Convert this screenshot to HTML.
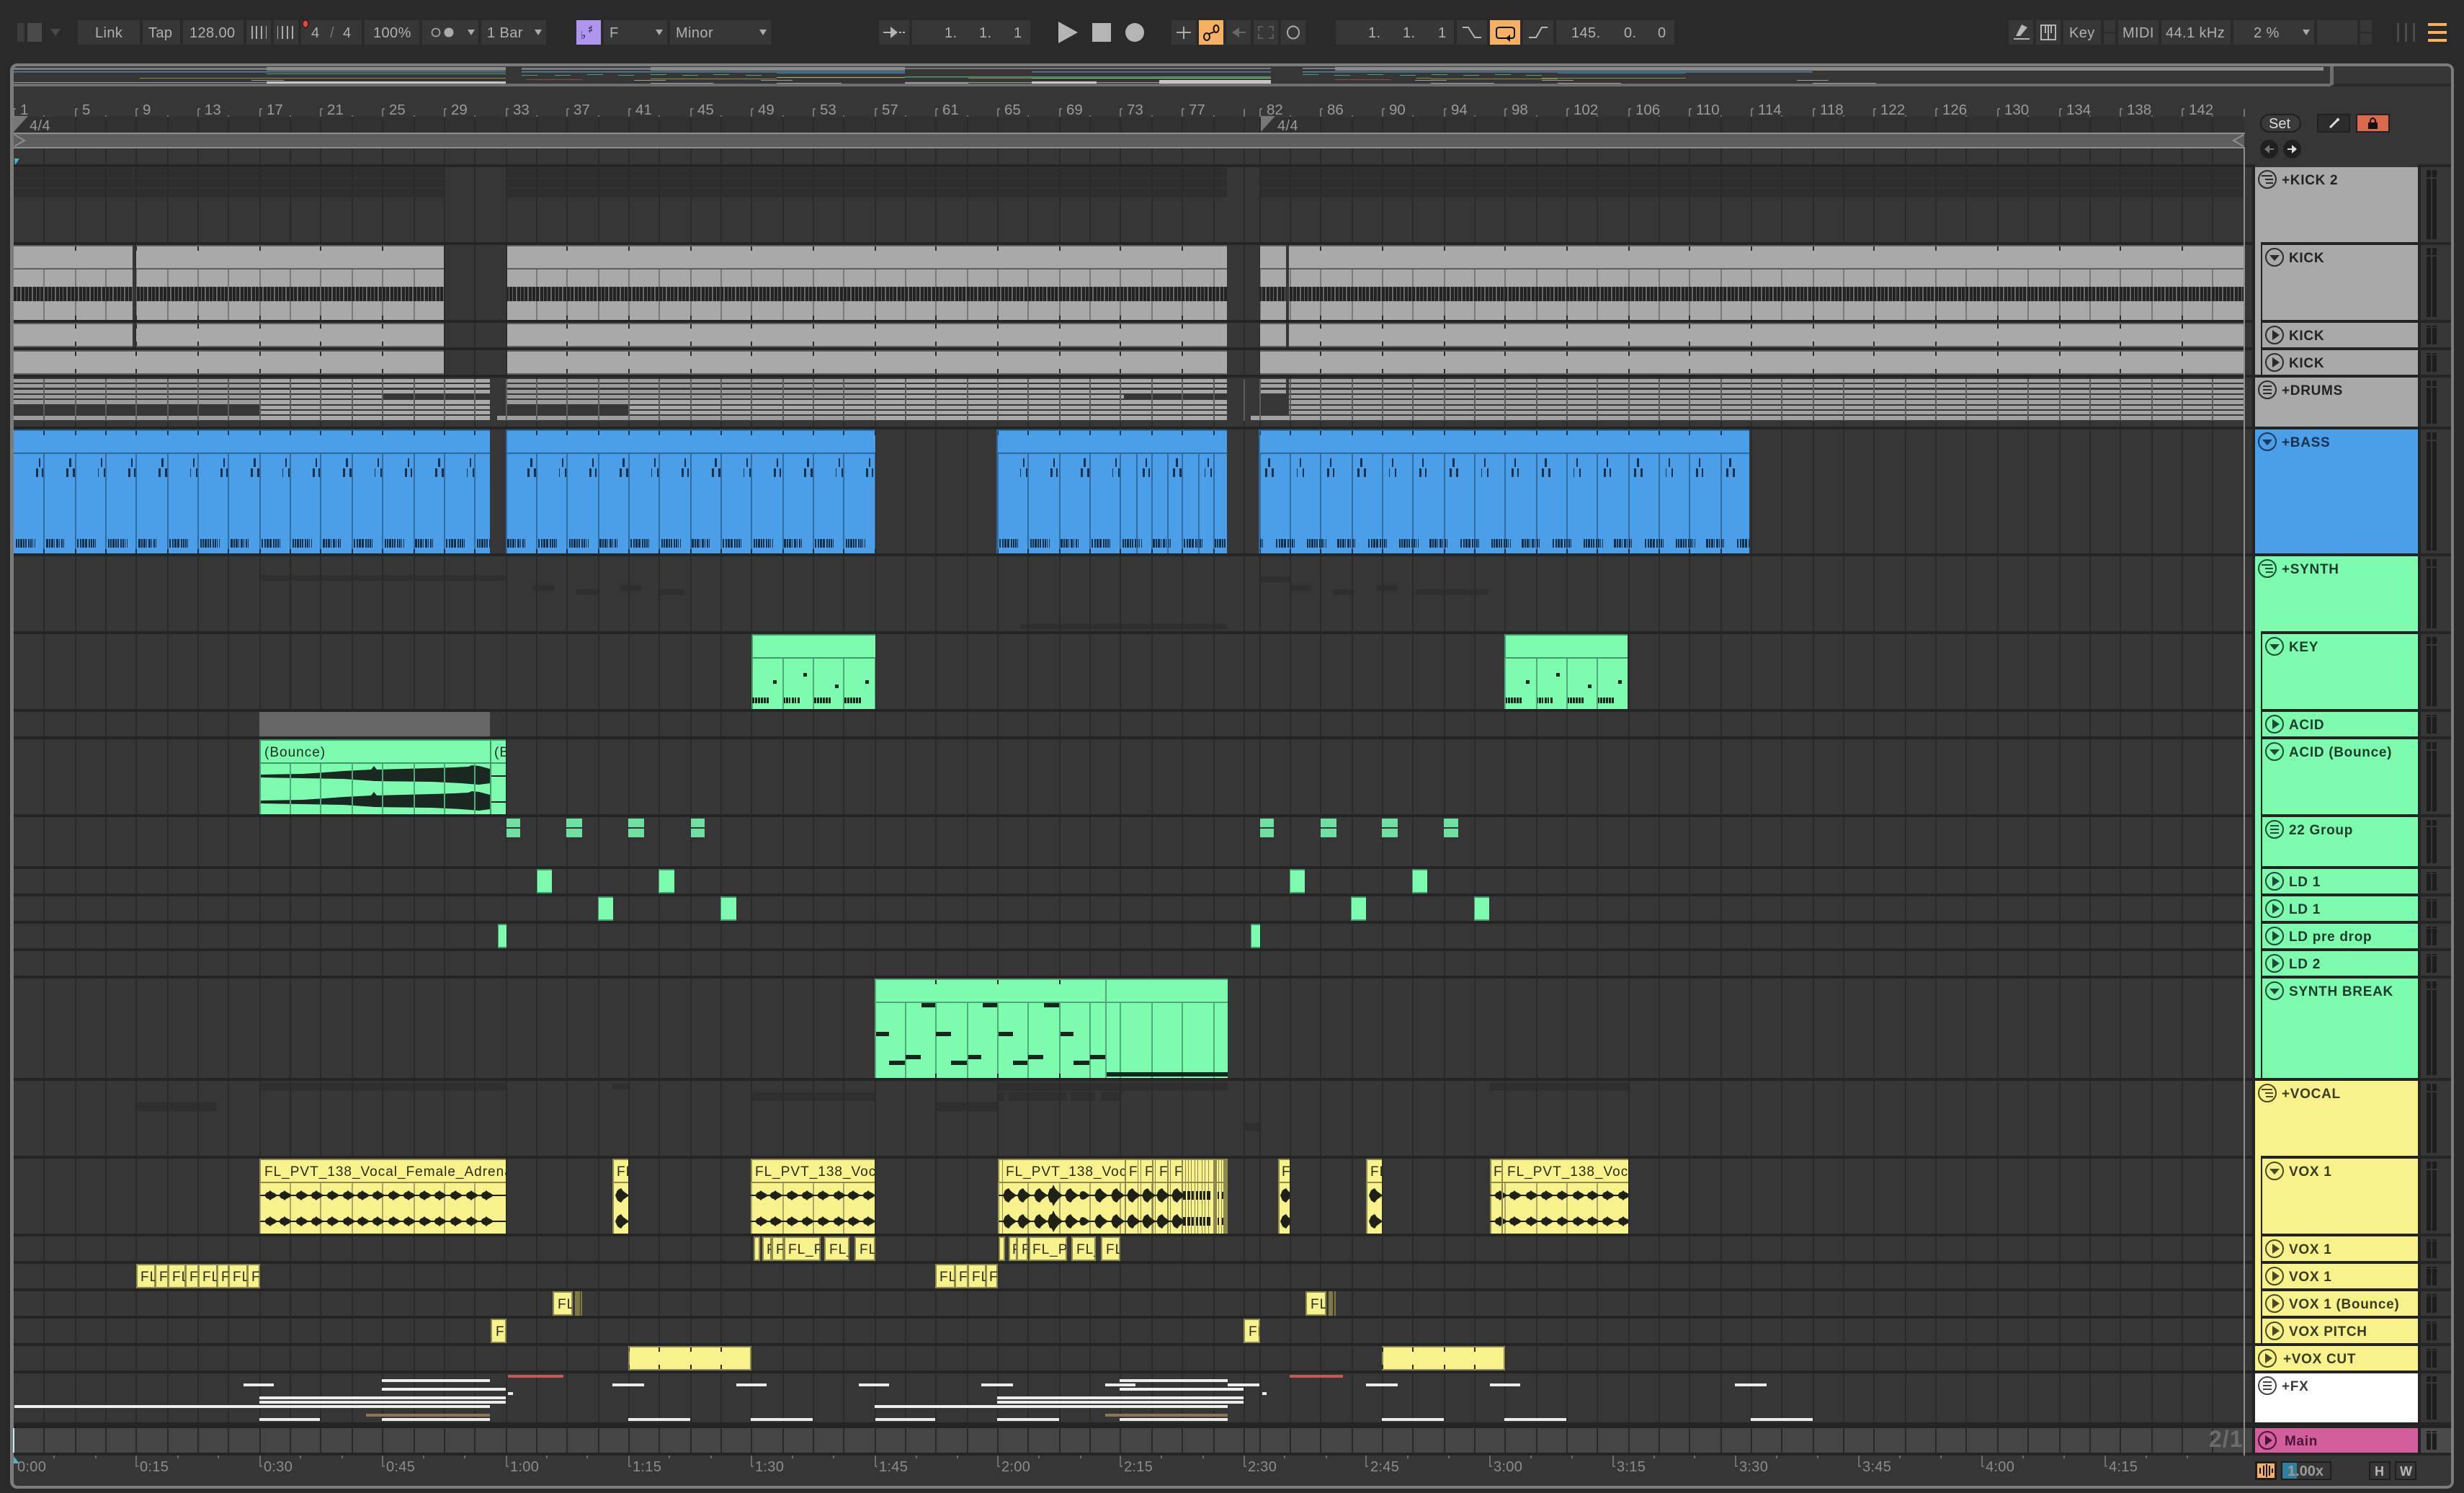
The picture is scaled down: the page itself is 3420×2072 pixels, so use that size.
<!DOCTYPE html>
<html><head><meta charset="utf-8"><title>Arrangement</title>
<style>
html,body{margin:0;padding:0;background:#2a2a2a}
svg{display:block}
.tb{font-size:20px;fill:#b0b0b0;letter-spacing:.4px}
.rl{font-size:20.5px;fill:#9a9a9a}
.tm{font-size:20px;fill:#8c8c8c;letter-spacing:.3px}
.n{font-size:19px;font-weight:bold;letter-spacing:.7px}
.c{font-size:19px;letter-spacing:1px;fill:#2a2a16}
.cg{font-size:19px;letter-spacing:1px;fill:#1a2a22}
.y{fill:#f7f28b;stroke:#8d8a50;stroke-width:2}
.e{shape-rendering:crispEdges}
</style></head><body>
<svg xmlns="http://www.w3.org/2000/svg" width="3420" height="2072" viewBox="0 0 3420 2072" font-family="'Liberation Sans',sans-serif">
<defs>
<path id="g" d="M61 0V2072M105 0V2072M147 0V2072M189 0V2072M233 0V2072M275 0V2072M317 0V2072M361 0V2072M403 0V2072M445 0V2072M489 0V2072M531 0V2072M575 0V2072M617 0V2072M659 0V2072M703 0V2072M745 0V2072M787 0V2072M831 0V2072M873 0V2072M915 0V2072M959 0V2072M1001 0V2072M1043 0V2072M1087 0V2072M1129 0V2072M1171 0V2072M1215 0V2072M1257 0V2072M1299 0V2072M1343 0V2072M1385 0V2072M1427 0V2072M1471 0V2072M1513 0V2072M1555 0V2072M1599 0V2072M1641 0V2072M1685 0V2072M1727 0V2072M1749 0V2072M1791 0V2072M1833 0V2072M1877 0V2072M1919 0V2072M1961 0V2072M2005 0V2072M2047 0V2072M2089 0V2072M2133 0V2072M2175 0V2072M2217 0V2072M2261 0V2072M2303 0V2072M2345 0V2072M2389 0V2072M2431 0V2072M2473 0V2072M2517 0V2072M2559 0V2072M2601 0V2072M2645 0V2072M2687 0V2072M2729 0V2072M2773 0V2072M2815 0V2072M2859 0V2072M2901 0V2072M2943 0V2072M2987 0V2072M3029 0V2072M3071 0V2072" fill="none" stroke-width="2"/>
<path id="g4" d="M105 0V2072M189 0V2072M275 0V2072M361 0V2072M445 0V2072M531 0V2072M617 0V2072M703 0V2072M787 0V2072M873 0V2072M959 0V2072M1043 0V2072M1129 0V2072M1215 0V2072M1299 0V2072M1385 0V2072M1471 0V2072M1555 0V2072M1641 0V2072M1727 0V2072M1833 0V2072M1919 0V2072M2005 0V2072M2089 0V2072M2175 0V2072M2261 0V2072M2345 0V2072M2431 0V2072M2517 0V2072M2601 0V2072M2687 0V2072M2773 0V2072M2859 0V2072M2943 0V2072M3029 0V2072" fill="none" stroke-width="2"/>
<clipPath id="cLane"><rect x="19" y="162" width="3096" height="22"/><rect x="19" y="206" width="3107" height="1810"/></clipPath>
<clipPath id="cGrayC"><rect x="19" y="374" width="165" height="70"/><rect x="189" y="374" width="427" height="70"/><rect x="704" y="374" width="999" height="70"/><rect x="1749" y="374" width="36" height="70"/><rect x="1789" y="374" width="1326" height="70"/></clipPath>
<clipPath id="cGrayT"><rect x="19" y="342" width="165" height="6"/><rect x="189" y="342" width="427" height="6"/><rect x="704" y="342" width="999" height="6"/><rect x="1789" y="342" width="1326" height="6"/><rect x="19" y="438" width="165" height="6"/><rect x="189" y="438" width="427" height="6"/><rect x="704" y="438" width="999" height="6"/><rect x="1789" y="438" width="1326" height="6"/><rect x="19" y="450" width="165" height="6"/><rect x="189" y="450" width="427" height="6"/><rect x="704" y="450" width="999" height="6"/><rect x="1789" y="450" width="1326" height="6"/><rect x="19" y="474" width="165" height="6"/><rect x="189" y="474" width="427" height="6"/><rect x="704" y="474" width="999" height="6"/><rect x="1789" y="474" width="1326" height="6"/><rect x="19" y="488" width="597" height="6"/><rect x="704" y="488" width="999" height="6"/><rect x="1749" y="488" width="1366" height="6"/><rect x="19" y="512" width="597" height="6"/><rect x="704" y="512" width="999" height="6"/><rect x="1749" y="512" width="1366" height="6"/></clipPath>
<clipPath id="cDrum"><rect x="19" y="526" width="3096" height="58"/></clipPath>
<clipPath id="cBlueC"><rect x="19" y="630" width="661" height="138"/><rect x="704" y="630" width="511" height="138"/><rect x="1385" y="630" width="318" height="138"/><rect x="1749" y="630" width="679" height="138"/></clipPath>
<clipPath id="cBlueT"><rect x="19" y="598" width="661" height="6"/><rect x="704" y="598" width="511" height="6"/><rect x="1385" y="598" width="318" height="6"/><rect x="1749" y="598" width="679" height="6"/><rect x="19" y="762" width="661" height="6"/><rect x="704" y="762" width="511" height="6"/><rect x="1385" y="762" width="318" height="6"/><rect x="1749" y="762" width="679" height="6"/></clipPath>
<clipPath id="cGreenC"><rect x="1043" y="914" width="172" height="70"/><rect x="2088" y="914" width="171" height="70"/><rect x="362" y="1060" width="340" height="70"/><rect x="1214" y="1392" width="490" height="104"/></clipPath>
<clipPath id="cYelC"><rect x="361" y="1642" width="341" height="70"/><rect x="850" y="1642" width="22" height="70"/><rect x="1042" y="1642" width="172" height="70"/><rect x="1385" y="1642" width="319" height="70"/><rect x="1774" y="1642" width="16" height="70"/><rect x="1896" y="1642" width="22" height="70"/><rect x="2068" y="1642" width="192" height="70"/></clipPath>
<clipPath id="cV1"><rect x="361" y="1642" width="341" height="70"/></clipPath>
<clipPath id="cV2"><rect x="1042" y="1642" width="172" height="70"/></clipPath>
<clipPath id="cV3"><rect x="2068" y="1642" width="192" height="70"/></clipPath>
<clipPath id="cYT"><rect x="873" y="1870" width="169" height="6"/><rect x="873" y="1894" width="169" height="6"/><rect x="1918" y="1870" width="170" height="6"/><rect x="1918" y="1894" width="170" height="6"/></clipPath>
<clipPath id="cSBT"><rect x="1216" y="1360" width="318" height="6"/><rect x="1216" y="1490" width="318" height="6"/></clipPath>
<pattern id="kick" patternUnits="userSpaceOnUse" x="19" y="398" width="16" height="20"><rect width="16" height="20" fill="#6a6a6a"/><rect x="0" width="4" height="20" fill="#242424"/><rect x="5" width="4" height="20" fill="#242424"/><rect x="11" width="4" height="20" fill="#242424"/></pattern>
<pattern id="bas" patternUnits="userSpaceOnUse" x="19" y="636" width="128" height="124">
<g fill="#142f4a"><rect x="35" width="2" height="12"/><rect x="31" y="14" width="3" height="12"/><rect x="39" y="14" width="2" height="12"/><rect x="77" width="3" height="12"/><rect x="73" y="14" width="3" height="12"/><rect x="82" y="14" width="3" height="12"/><rect x="121" width="2" height="12"/><rect x="117" y="14" width="1" height="12"/><rect x="125" y="14" width="2" height="12"/>
<path d="M3 112h2v12h-2zM6 112h2v12h-2zM9 112h3v12h-3zM13 112h2v12h-2zM16 112h2v12h-2zM20 112h2v12h-2zM23 112h2v12h-2zM26 112h1v12h-1zM29 112h1v12h-1zM45 112h3v12h-3zM49 112h2v12h-2zM52 112h3v12h-3zM56 112h1v12h-1zM59 112h3v12h-3zM63 112h1v12h-1zM66 112h2v12h-2zM69 112h1v12h-1zM88 112h2v12h-2zM92 112h2v12h-2zM95 112h3v12h-3zM99 112h3v12h-3zM104 112h2v12h-2zM107 112h2v12h-2zM110 112h2v12h-2zM113 112h1v12h-1z"/></g></pattern>
<pattern id="key" patternUnits="userSpaceOnUse" x="1043" y="920" width="128" height="56">
<g fill="#16261f"><path d="M1 48h3v8h-3zM5 48h3v8h-3zM9 48h3v8h-3zM13 48h3v8h-3zM17 48h3v8h-3zM21 48h3v8h-3zM44 48h3v8h-3zM48 48h3v8h-3zM52 48h2v8h-2zM56 48h3v8h-3zM60 48h2v8h-2zM64 48h3v8h-3zM87 48h3v8h-3zM91 48h3v8h-3zM95 48h3v8h-3zM99 48h3v8h-3zM103 48h3v8h-3zM107 48h3v8h-3zM30 24h5v5h-5zM72 14h5v5h-5zM116 30h5v5h-5z"/></g></pattern>
<path id="bb" d="M-6 0L-3 -4L0 -5L2 -7L4 -5L8 -3L11 -1L11 1L8 3L4 5L2 7L0 5L-3 4Z"/>
<g id="ch1" fill="#1f2016"><use href="#bb" x="373"/><use href="#bb" x="393"/><use href="#bb" x="416"/><use href="#bb" x="437"/><use href="#bb" x="459"/><use href="#bb" x="481"/><use href="#bb" x="501"/><use href="#bb" x="522"/><use href="#bb" x="544"/><use href="#bb" x="565"/><use href="#bb" x="587"/><use href="#bb" x="608"/><use href="#bb" x="630"/><use href="#bb" x="652"/><use href="#bb" x="673"/><path class="e" d="M361 -1H702V1H361z"/></g>
<path id="bl" d="M-7 0L-4 -9L-1 -10L1 -15L4 -9L8 -5L13 -1L13 1L8 5L4 10L1 15L-1 10L-4 9Z"/>
<path id="bm" d="M-6 0L-3 -7L0 -9L2 -10L5 -6L9 -3L12 -1L12 1L9 3L5 6L2 10L0 9L-3 7Z"/>
<path id="bs" d="M-5 0L-3 -5L0 -6L3 -5L7 -2L9 -1L9 1L7 2L3 5L0 6L-3 5Z"/>
<g id="ch2" fill="#1f2016"><use href="#bm" x="1398"/><use href="#bm" x="1418"/><use href="#bm" x="1441"/><use href="#bl" x="1461"/><use href="#bm" x="1484"/><use href="#bs" x="1503"/><use href="#bm" x="1525"/><use href="#bm" x="1548"/><use href="#bm" x="1570"/><use href="#bm" x="1591"/><use href="#bm" x="1611"/><use href="#bm" x="1632"/><path class="e" d="M1386 -1H1640V1H1386zM1642 -6h4v12h-4zM1648 -6h4v12h-4zM1654 -6h3v12h-3zM1660 -6h3v12h-3zM1665 -6h3v12h-3zM1670 -6h3v12h-3zM1675 -6h5v12h-5zM1690 -5h2v10h-2zM1696 -5h2v10h-2z"/></g>
<path id="bw" fill="#1b2822" d="M362 -2L420 -3L450 -5L477 -7L515 -9L519 -14L523 -9L560 -10L600 -11L631 -12L650 -13L655 -15L665 -14L680 -10L680 10L665 12L640 10L600 8L520 7L477 4L420 3L362 2Z"/>
<g id="iD"><ellipse rx="12" ry="12" fill="none" stroke-width="2"/><path d="M-7 -3H7L0 5Z" stroke="none"/></g>
<g id="iR"><ellipse rx="12" ry="12" fill="none" stroke-width="2"/><path d="M-3 -7L7 0L-3 7Z" stroke="none"/></g>
<g id="iS"><ellipse rx="12" ry="12" fill="none" stroke-width="2"/><path d="M-8 -5H7M-3 0H8M-2 5H8" fill="none" stroke-width="2"/></g>
<g id="iE"><ellipse rx="12" ry="12" fill="none" stroke-width="2"/><path d="M-6 -5H6M-6 0H6M-6 5H6" fill="none" stroke-width="2"/></g>
</defs>

<!-- window -->
<rect width="3420" height="2072" fill="#2a2a2a"/>
<rect x="14" y="88" width="3392" height="1978" rx="10" fill="#7c7c7c"/>
<rect x="19" y="92" width="3383" height="1970" rx="5" fill="#363636"/>

<!-- toolbar buttons -->
<g class="e" fill="#373737"><rect x="108" y="28" width="86" height="34"/><rect x="198" y="28" width="52" height="34"/><rect x="254" y="28" width="84" height="34"/><rect x="342" y="28" width="34" height="34"/><rect x="380" y="28" width="34" height="34"/><rect x="418" y="28" width="84" height="34"/><rect x="506" y="28" width="76" height="34"/><rect x="586" y="28" width="78" height="34"/><rect x="668" y="28" width="90" height="34"/><rect x="838" y="28" width="88" height="34"/><rect x="930" y="28" width="140" height="34"/><rect x="1220" y="28" width="42" height="34"/><rect x="1266" y="28" width="164" height="34"/><rect x="1626" y="28" width="34" height="34"/><rect x="1702" y="28" width="34" height="34"/><rect x="1740" y="28" width="34" height="34"/><rect x="1778" y="28" width="34" height="34"/><rect x="1854" y="28" width="164" height="34"/><rect x="2022" y="28" width="42" height="34"/><rect x="2114" y="28" width="42" height="34"/><rect x="2160" y="28" width="164" height="34"/><rect x="2788" y="28" width="34" height="34"/><rect x="2826" y="28" width="34" height="34"/><rect x="2864" y="28" width="52" height="34"/><rect x="2920" y="28" width="16" height="16"/><rect x="2920" y="46" width="16" height="16"/><rect x="2940" y="28" width="56" height="34"/><rect x="3000" y="28" width="96" height="34"/><rect x="3100" y="28" width="112" height="34"/><rect x="3216" y="28" width="56" height="34"/><rect x="3276" y="28" width="16" height="16"/><rect x="3276" y="46" width="16" height="16"/></g>
<g class="e"><rect x="24" y="32" width="10" height="26" fill="#3c3c3c"/><rect x="38" y="32" width="20" height="26" fill="#4a4a4a"/><rect x="800" y="28" width="34" height="34" fill="#b095f0"/><rect x="1664" y="28" width="34" height="34" fill="#f5b061"/><rect x="2068" y="28" width="42" height="34" fill="#f5b061"/><path fill="#4a4a4a" d="M3327 32h3v26h-3zM3338 32h3v26h-3zM3349 32h3v26h-3z"/><path fill="#f5b061" d="M3370 32h26v4h-26zM3370 43h26v4h-26zM3370 54h26v4h-26z"/></g>
<path d="M70 40H84L77 50Z" fill="#4a4a4a"/>
<g class="tb"><text x="132" y="52">Link</text><text x="206" y="52">Tap</text><text x="263" y="52">128.00</text><text x="432" y="52">4</text><text x="458" y="52" style="fill:#777">/</text><text x="476" y="52">4</text><text x="518" y="52">100%</text><text x="676" y="52">1 Bar</text><text x="846" y="52">F</text><text x="938" y="52">Minor</text>
<text x="1311" y="52">1.</text><text x="1359" y="52">1.</text><text x="1407" y="52">1</text><text x="1899" y="52">1.</text><text x="1947" y="52">1.</text><text x="1996" y="52">1</text><text x="2181" y="52">145.</text><text x="2254" y="52">0.</text><text x="2301" y="52">0</text>
<text x="2872" y="52">Key</text><text x="2946" y="52">MIDI</text><text x="3006" y="52">44.1 kHz</text><text x="3128" y="52">2 %</text></g>
<g fill="#aaa"><path d="M649 41H659L654 49ZM742 41H752L747 49ZM910 41H920L915 49ZM1054 41H1064L1059 49ZM3196 41H3206L3201 49Z"/>
<path class="e" d="M349 36h2v18h-2zM355 36h2v18h-2zM362 36h2v18h-2zM369 36h1v18h-1zM385 36h1v18h-1zM391 36h2v18h-2zM398 36h2v18h-2zM405 36h2v18h-2z"/>
<circle cx="623" cy="45" r="6.5"/></g>
<circle cx="605" cy="45" r="5.5" fill="none" stroke="#aaa" stroke-width="1.6"/>
<ellipse cx="424" cy="33" rx="4" ry="5" fill="#e8453a" stroke="#111" stroke-width="1"/>
<g fill="#111"><text x="806" y="54" font-family="'DejaVu Sans',sans-serif" font-size="15">♭</text><text x="816" y="46" font-family="'DejaVu Sans',sans-serif" font-size="15" font-weight="bold">♯</text></g>
<!-- transport icons -->
<g fill="#b4b4b4"><path d="M1469 30L1496 45L1469 60Z"/><rect x="1516" y="32" width="26" height="26"/><ellipse cx="1575" cy="45" rx="13" ry="13"/><path d="M1226 44H1236V37L1246 45L1236 53V46H1226ZM1248 44h3v2h-3zM1253 44h3v2h-3z"/></g>
<path d="M1643 37V54M1633 45H1653" stroke="#aaa" stroke-width="2"/>
<g fill="none" stroke="#111" stroke-width="2"><ellipse cx="1675" cy="51" rx="4" ry="5"/><ellipse cx="1688" cy="40" rx="3.5" ry="5"/><path d="M1678 47L1686 44"/><path d="M2081 38H2098Q2102 38 2102 42V49Q2102 53 2098 53H2081Q2077 53 2077 49V42Q2077 38 2081 38Z"/></g>
<path d="M2090 53L2096 48V58Z" fill="#111"/>
<path d="M1729 44H1720V38L1710 45L1720 52V46H1729Z" fill="#666"/>
<path d="M1747 43V37H1753M1761 37H1767V43M1747 47V53H1753M1761 53H1767V47" fill="none" stroke="#5a5a5a" stroke-width="2"/>
<ellipse cx="1795" cy="45" rx="8" ry="8.5" fill="none" stroke="#aaa" stroke-width="2"/>
<g fill="none" stroke="#b4b4b4" stroke-width="2"><path d="M2030 38H2038L2047 52H2056"/><path d="M2122 52H2132L2140 38H2148"/></g>
<path d="M2806 34L2814 38L2804 50H2798Z" fill="#b4b4b4"/><rect class="e" x="2795" y="53" width="22" height="2" fill="#b4b4b4"/>
<g fill="none" stroke="#b4b4b4" stroke-width="2"><rect x="2833" y="35" width="20" height="20"/><path d="M2843 35V55"/></g>
<g class="e" fill="#b4b4b4"><path d="M2838 35h2v11h-2zM2846 35h2v11h-2z"/></g>

<!-- overview -->
<g class="e">
<path fill="#7a7a7a" d="M19 94H370V97H19zM724 94H903V97H724zM1256 94H1764V96H1256zM1808 94H1853V96H1808z"/>
<path fill="#8a8a8a" d="M370 93H702V98H370zM903 93H1256V98H903zM1853 93H3225V98H1853z"/>
<path fill="#4f86b0" d="M19 99H702V100.5H19zM724 99H1256V100.5H724zM1432 99H1764V100.5H1432zM1808 99H2516V100.5H1808z"/>
<path fill="#2c7fa8" d="M1078 101H1256V102H1078zM2162 101H2340V102H2162z"/>
<path fill="#4aa070" d="M370 102H702V103H370zM724 104h22v1h-22zM770 104h22v1h-22zM815 103h22v1h-22zM858 104h22v1h-22zM903 103h22v1h-22zM947 104h22v1h-22zM990 103h22v1h-22zM1035 104h22v1h-22zM1256 106H1432V107.5H1256zM1432 106H1764V107.5H1432zM1808 103h22v1h-22zM1852 104h22v1h-22zM1898 103h22v1h-22zM1943 104h22v1h-22zM1987 103h22v1h-22zM2031 104h22v1h-22zM2075 103h22v1h-22zM2118 104h22v1h-22z"/>
<path fill="#8d8a50" d="M194 108H702V109H194zM903 109H1078V110H903zM1344 108H1432V109H1344zM1966 108H1986V109H1966zM1986 109H2162V110H1986zM2140 108H2340V109H2140z"/>
<path fill="#b9b56f" d="M1078 107H1256V108H1078zM1432 108H1764V109H1432z"/>
<path fill="#8e4a42" d="M730 110H808V111H730zM1853 110H1930V111H1853z"/>
<path fill="#999" d="M19 114H370V115H19zM349 111H394V112H349zM880 111H924V112H880zM903 115H990V116H903zM1056 111H1100V112H1056zM1078 115H1168V116H1078zM1256 114H1344V116H1256zM1344 114H1432V115H1344zM1522 114H1609V115H1522zM1964 111H2008V112H1964zM1986 115H2074V116H1986zM2140 111H2184V112H2140zM2162 115H2250V116H2162zM2494 111H2538V112H2494zM2516 115H2604V116H2516z"/>
<path fill="#c4c4c4" d="M370 113H702V116H370zM1432 113H1522V116H1432zM1609 111H1764V116H1609z"/>
<rect x="19" y="116" width="3216" height="4" fill="#6e6e6e"/>
<rect x="3238" y="116" width="164" height="4" fill="#2a2a2a"/>
<rect x="3234" y="92" width="5" height="26" fill="#6e6e6e"/>
</g>

<!-- lanes -->
<rect class="e" x="19" y="162" width="3096" height="22" fill="#313131"/>
<rect class="e" x="19" y="1982" width="3107" height="34" fill="#454545"/>
<g class="e"><rect x="19" y="233" width="598" height="41" fill="#2e2e2e"/><rect x="704" y="233" width="999" height="41" fill="#2e2e2e"/><rect x="1749" y="233" width="1366" height="41" fill="#2e2e2e"/><path fill="#343434" d="M19 246H617V248H19zM19 260H617V262H19zM704 246H1703V248H704zM704 260H1703V262H704zM1749 246H3115V248H1749zM1749 260H3115V262H1749zM184 233h1v27h-1z"/>
<path fill="#2f2f2f" d="M360 798H702V806H360zM740 812H770V820H740zM800 818H830V826H800zM860 812H890V820H860zM915 818H950V826H915zM1417 866H1703V874H1417zM1749 800H1790V808H1749zM1790 812H1820V820H1790zM1850 818H1880V826H1850zM1910 812H1940V820H1910zM1965 818H2065V826H1965zM360 1502H702V1514H360zM188 1530H300V1542H188zM850 1504H872V1512H850zM1044 1516H1214V1528H1044zM1385 1502H1704V1514H1385zM1200 1516H1214V1528H1200zM1385 1516H1394V1528H1385zM1400 1516H1480V1528H1400zM1486 1516H1520V1528H1486zM1528 1516H1555V1528H1528zM1298 1530H1385V1542H1298zM1726 1558H1749V1570H1726zM2068 1502H2260V1514H2068z"/></g>
<use href="#g" class="e" stroke="#2a2a2a" clip-path="url(#cLane)"/>
<!-- separators -->
<path class="e" fill="#242424" d="M19 228H3130V232H19zM19 336H3130V340H19zM19 444H3130V448H19zM19 482H3130V486H19zM19 520H3130V524H19zM19 592H3130V596H19zM19 768H3130V772H19zM19 876H3130V880H19zM19 984H3130V988H19zM19 1022H3130V1026H19zM19 1130H3130V1134H19zM19 1202H3130V1206H19zM19 1240H3130V1244H19zM19 1278H3130V1282H19zM19 1316H3130V1320H19zM19 1354H3130V1358H19zM19 1496H3130V1500H19zM19 1604H3130V1608H19zM19 1712H3130V1716H19zM19 1750H3130V1754H19zM19 1788H3130V1792H19zM19 1826H3130V1830H19zM19 1864H3130V1868H19zM19 1902H3130V1906H19zM19 1974H3130V1982H19zM19 2016H3130V2020H19zM3126 228H3130V2020H3126zM3356 228H3402V232H3356zM3356 336H3402V340H3356zM3356 444H3402V448H3356zM3356 482H3402V486H3356zM3356 520H3402V524H3356zM3356 592H3402V596H3356zM3356 768H3402V772H3356zM3356 876H3402V880H3356zM3356 984H3402V988H3356zM3356 1022H3402V1026H3356zM3356 1130H3402V1134H3356zM3356 1202H3402V1206H3356zM3356 1240H3402V1244H3356zM3356 1278H3402V1282H3356zM3356 1316H3402V1320H3356zM3356 1354H3402V1358H3356zM3356 1496H3402V1500H3356zM3356 1604H3402V1608H3356zM3356 1712H3402V1716H3356zM3356 1750H3402V1754H3356zM3356 1788H3402V1792H3356zM3356 1826H3402V1830H3356zM3356 1864H3402V1868H3356zM3356 1902H3402V1906H3356zM3356 1974H3402V1982H3356zM3356 2016H3402V2020H3356zM3356 232H3360V2016H3356z"/>

<!-- loop brace -->
<rect class="e" x="19" y="184" width="3096" height="22" fill="#5e5e5e"/>
<path class="e" fill="#8e8e8e" d="M19 184H3116V186H19zM19 204H3116V206H19z"/>
<path d="M20 187L34 195L20 203M3114 187L3100 195L3114 203" fill="none" stroke="#8e8e8e" stroke-width="2"/>
<path d="M20 220H27L21 229Z" fill="#46b5d6"/>
<path d="M19 161H39L19 183Z" fill="#777"/><path d="M1750 161H1770L1750 183Z" fill="#777"/>
<g class="tb"><text x="41" y="181" style="fill:#9a9a9a">4/4</text><text x="1773" y="181" style="fill:#9a9a9a">4/4</text></g>

<!-- top ruler -->
<path d="M19 151V162M19 151h3M105 151V162M105 151h3M189 151V162M189 151h3M275 151V162M275 151h3M361 151V162M361 151h3M445 151V162M445 151h3M531 151V162M531 151h3M617 151V162M617 151h3M703 151V162M703 151h3M787 151V162M787 151h3M873 151V162M873 151h3M959 151V162M959 151h3M1043 151V162M1043 151h3M1129 151V162M1129 151h3M1215 151V162M1215 151h3M1299 151V162M1299 151h3M1385 151V162M1385 151h3M1471 151V162M1471 151h3M1555 151V162M1555 151h3M1641 151V162M1641 151h3M1727 151V162M1749 151V162M1749 151h3M1833 151V162M1833 151h3M1919 151V162M1919 151h3M2005 151V162M2005 151h3M2089 151V162M2089 151h3M2175 151V162M2175 151h3M2261 151V162M2261 151h3M2345 151V162M2345 151h3M2431 151V162M2431 151h3M2517 151V162M2517 151h3M2601 151V162M2601 151h3M2687 151V162M2687 151h3M2773 151V162M2773 151h3M2859 151V162M2859 151h3M2943 151V162M2943 151h3M3029 151V162M3029 151h3M3115 151V162M61 160V162M147 160V162M233 160V162M317 160V162M403 160V162M489 160V162M575 160V162M659 160V162M745 160V162M831 160V162M915 160V162M1001 160V162M1087 160V162M1171 160V162M1257 160V162M1343 160V162M1427 160V162M1513 160V162M1599 160V162M1685 160V162M1791 160V162M1877 160V162M1961 160V162M2047 160V162M2133 160V162M2217 160V162M2303 160V162M2389 160V162M2473 160V162M2559 160V162M2645 160V162M2729 160V162M2815 160V162M2901 160V162M2987 160V162M3071 160V162" stroke="#8a8a8a" stroke-width="1.5" fill="none"/>
<g class="rl"><text x="28" y="159">1</text><text x="114" y="159">5</text><text x="198" y="159">9</text><text x="284" y="159">13</text><text x="370" y="159">17</text><text x="454" y="159">21</text><text x="540" y="159">25</text><text x="626" y="159">29</text><text x="712" y="159">33</text><text x="796" y="159">37</text><text x="882" y="159">41</text><text x="968" y="159">45</text><text x="1052" y="159">49</text><text x="1138" y="159">53</text><text x="1224" y="159">57</text><text x="1308" y="159">61</text><text x="1394" y="159">65</text><text x="1480" y="159">69</text><text x="1564" y="159">73</text><text x="1650" y="159">77</text><text x="1758" y="159">82</text><text x="1842" y="159">86</text><text x="1928" y="159">90</text><text x="2014" y="159">94</text><text x="2098" y="159">98</text><text x="2184" y="159">102</text><text x="2270" y="159">106</text><text x="2354" y="159">110</text><text x="2440" y="159">114</text><text x="2526" y="159">118</text><text x="2610" y="159">122</text><text x="2696" y="159">126</text><text x="2782" y="159">130</text><text x="2868" y="159">134</text><text x="2952" y="159">138</text><text x="3038" y="159">142</text></g>

<!-- KICK clips -->
<g class="e">
<path fill="#a9a9a9" d="M19 340H184V444H19zM189 340H616V444H189zM704 340H1703V444H704zM1749 340H1785V444H1749zM1789 340H3115V444H1789zM19 448H184V482H19zM189 448H616V482H189zM704 448H1703V482H704zM1749 448H1785V482H1749zM1789 448H3115V482H1789zM19 486H616V520H19zM704 486H1703V520H704zM1749 486H3115V520H1749z"/>
<path fill="#606060" d="M19 340H184V342H19zM189 340H616V342H189zM704 340H1703V342H704zM1749 340H1785V342H1749zM1789 340H3115V342H1789zM19 372H184V374H19zM189 372H616V374H189zM704 372H1703V374H704zM1749 372H1785V374H1749zM1789 372H3115V374H1789zM19 448H184V450H19zM189 448H616V450H189zM704 448H1703V450H704zM1749 448H1785V450H1749zM1789 448H3115V450H1789zM19 480H184V482H19zM189 480H616V482H189zM704 480H1703V482H704zM1749 480H1785V482H1749zM1789 480H3115V482H1789zM19 486H616V488H19zM704 486H1703V488H704zM1749 486H3115V488H1749zM19 518H616V520H19zM704 518H1703V520H704zM1749 518H3115V520H1749z"/>
<use href="#g" stroke="#7a7a7a" clip-path="url(#cGrayC)"/>
<path fill="url(#kick)" d="M19 398H184V418H19zM189 398H616V418H189zM704 398H1703V418H704zM1749 398H1785V418H1749zM1789 398H3115V418H1789z"/>
<use href="#g4" stroke="#2b2b2b" clip-path="url(#cGrayT)"/>
</g>

<!-- DRUMS -->
<g class="e" clip-path="url(#cDrum)">
<path fill="#9c9c9c" d="M19 526H361V531H19zM19 533H361V538H19zM19 541H361V546H19zM19 548H361V553H19zM19 555H361V561H19zM19 577H361V583H19zM704 526H1215V531H704zM704 533H1215V538H704zM704 541H1215V546H704zM702 548H1215V553H702zM704 555H872V561H704zM690 577H1215V583H690z"/>
<path fill="#a9a9a9" d="M361 526H680V531H361zM361 533H680V538H361zM361 541H680V546H361zM361 548H530V553H361zM361 555H680V561H361zM360 563H680V568H360zM360 570H680V575H360zM361 577H680V583H361zM1215 526H1703V531H1215zM1215 533H1703V538H1215zM1215 541H1703V546H1215zM1215 548H1560V553H1215zM872 555H1703V561H872zM872 563H1703V568H872zM872 570H1703V575H872zM1215 577H1703V583H1215z"/>
<path fill="#a2a2a2" d="M1749 526H1785V531H1749zM1749 533H1785V538H1749zM1749 541H1785V546H1749zM1789 526H3115V531H1789zM1789 533H3115V538H1789zM1789 541H3115V546H1789zM1789 548H3115V553H1789zM1789 555H3115V561H1789zM1789 563H3115V568H1789zM1789 570H3115V575H1789zM1736 577H3115V583H1736z"/>
<use href="#g" stroke="#5c5c5c"/>
</g>

<!-- BASS -->
<g class="e">
<path fill="#4a9fe8" d="M19 596H680V768H19zM704 596H1215V768H704zM1385 596H1703V768H1385zM1749 596H2428V768H1749z"/>
<path fill="#2b6ba0" d="M19 596H680V598H19zM704 596H1215V598H704zM1385 596H1703V598H1385zM1749 596H2428V598H1749zM19 628H680V630H19zM704 628H1215V630H704zM1385 628H1703V630H1385zM1749 628H2428V630H1749zM702 596h2v172h-2zM1383 596h2v172h-2zM1747 596h2v172h-2z"/>
<use href="#g" stroke="#2f6da3" clip-path="url(#cBlueC)"/>
<use href="#g" stroke="#142f4a" clip-path="url(#cBlueT)"/>
<path fill="url(#bas)" d="M19 636H680V760H19zM704 636H1215V760H704zM1385 636H1703V760H1385zM1749 636H2428V760H1749z"/>
<path fill="#2f6da3" d="M1577 630h2v138h-2zM1620 630h2v138h-2zM1663 630h2v138h-2z"/>
</g>

<!-- KEY -->
<g class="e">
<path fill="#7dfcb0" d="M1043 880H1215V984H1043zM2088 880H2259V984H2088zM362 1026H702V1130H362z"/>
<path fill="#3f9c6a" d="M1043 880H1215V882H1043zM2088 880H2259V882H2088zM1043 912H1215V914H1043zM2088 912H2259V914H2088zM360 1026H702V1028H360zM360 1058H702V1060H360zM360 1026h2v104h-2zM680 1026h2v104h-2zM1043 880h2v104h-2zM2088 880h2v104h-2z"/>
<use href="#g" stroke="#4fa878" clip-path="url(#cGreenC)"/>
<path fill="url(#key)" d="M1043 920H1215V976H1043z"/>
<g transform="translate(1045 0)"><path fill="url(#key)" d="M1043 920H1214V976H1043z"/></g>
</g>
<rect class="e" x="360" y="988" width="320" height="34" fill="#666"/>
<text x="367" y="1050" class="cg">(Bounce)</text>
<svg x="682" y="1030" width="20" height="28"><text x="4" y="20" class="cg">(Bounce)</text></svg>
<use href="#bw" transform="translate(0 1077)"/><use href="#bw" transform="translate(0 1113)"/>
<path class="e" fill="#1b2822" d="M682 1076H702V1078H682zM682 1112H702V1114H682z"/>

<!-- LD clips -->
<g class="e">
<path fill="#6ee0a0" d="M703 1136H722V1148H703zM703 1150H722V1162H703zM786 1136H808V1148H786zM786 1150H808V1162H786zM872 1136H894V1148H872zM872 1150H894V1162H872zM959 1136H978V1148H959zM959 1150H978V1162H959zM1749 1136H1768V1148H1749zM1749 1150H1768V1162H1749zM1833 1136H1855V1148H1833zM1833 1150H1855V1162H1833zM1918 1136H1940V1148H1918zM1918 1150H1940V1162H1918zM2004 1136H2024V1148H2004zM2004 1150H2024V1162H2004z"/>
<path fill="#3f9c6a" d="M745 1206H766V1240H745zM914 1206H936V1240H914zM1790 1206H1811V1240H1790zM1960 1206H1981V1240H1960zM830 1244H851V1278H830zM1000 1244H1022V1278H1000zM1875 1244H1896V1278H1875zM2046 1244H2067V1278H2046zM691 1282H703V1316H691zM1736 1282H1749V1316H1736z"/>
<path fill="#7dfcb0" d="M746 1208H766V1238H746zM915 1208H936V1238H915zM1791 1208H1811V1238H1791zM1961 1208H1981V1238H1961zM831 1246H851V1276H831zM1001 1246H1022V1276H1001zM1876 1246H1896V1276H1876zM2047 1246H2067V1276H2047zM692 1284H703V1314H692zM1737 1284H1749V1314H1737z"/>
</g>

<!-- SYNTH BREAK -->
<g class="e">
<path fill="#7dfcb0" d="M1214 1358H1704V1496H1214z"/>
<path fill="#4fa878" d="M1214 1358H1704V1360H1214zM1214 1390H1704V1392H1214zM1214 1358h2v138h-2zM1534 1358h2v138h-2z"/>
<use href="#g" stroke="#4fa878" clip-path="url(#cGreenC)"/>
<use href="#g4" stroke="#16261f" clip-path="url(#cSBT)"/>
<path fill="#16261f" d="M1279 1392H1298V1398H1279zM1364 1392H1384V1398H1364zM1449 1392H1470V1398H1449zM1216 1432H1234V1438H1216zM1299 1432H1320V1438H1299zM1386 1432H1406V1438H1386zM1472 1432H1490V1438H1472zM1257 1464H1278V1470H1257zM1344 1464H1362V1470H1344zM1427 1464H1448V1470H1427zM1513 1464H1534V1470H1513zM1234 1472H1256V1478H1234zM1320 1472H1342V1478H1320zM1406 1472H1426V1478H1406zM1490 1472H1512V1478H1490zM1536 1488H1704V1494H1536z"/>
</g>

<!-- VOX 1 clips -->
<g class="e">
<path fill="#f7f28b" d="M361 1608H702V1712H361zM850 1608H872V1712H850zM1042 1608H1214V1712H1042zM1385 1608H1704V1712H1385zM1774 1608H1790V1712H1774zM1896 1608H1918V1712H1896zM2068 1608H2260V1712H2068z"/>
<path fill="#8d8a50" d="M361 1608H702V1610H361zM850 1608H872V1610H850zM1042 1608H1214V1610H1042zM1385 1608H1704V1610H1385zM1774 1608H1790V1610H1774zM1896 1608H1918V1610H1896zM2068 1608H2260V1610H2068zM361 1640H702V1642H361zM850 1640H872V1642H850zM1042 1640H1214V1642H1042zM1385 1640H1704V1642H1385zM1774 1640H1790V1642H1774zM1896 1640H1918V1642H1896zM2068 1640H2260V1642H2068zM360 1608h2v104h-2zM850 1608h2v104h-2zM1042 1608h2v104h-2zM1385 1608h2v104h-2zM1774 1608h2v104h-2zM1896 1608h2v104h-2zM2068 1608h2v104h-2z"/>
<use href="#g" stroke="#a8a56b" clip-path="url(#cYelC)"/>
<path fill="#8d8a50" d="M1561 1610h2v102h-2zM1579 1610h1v102h-1zM1583 1610h1v102h-1zM1599 1610h2v102h-2zM1603 1610h1v102h-1zM1620 1610h2v102h-2zM1624 1610h1v102h-1zM1640 1610h2v102h-2zM1645 1610h1v102h-1zM1649 1610h1v102h-1zM1653 1610h1v102h-1zM1658 1610h1v102h-1zM1662 1610h1v102h-1zM1668 1610h1v102h-1zM1672 1610h1v102h-1zM1677 1610h1v102h-1zM1684 1610h5v102h-5zM1691 1610h1v102h-1zM1695 1610h1v102h-1zM1698 1610h6v102h-6zM1391 1610h1v102h-1z"/>
</g>
<g clip-path="url(#cV1)"><use href="#ch1" y="1659"/><use href="#ch1" y="1695"/></g>
<g clip-path="url(#cV2)"><use href="#ch1" x="681" y="1659"/><use href="#ch1" x="681" y="1695"/></g>
<g clip-path="url(#cV3)"><use href="#ch1" x="1707" y="1659"/><use href="#ch1" x="1707" y="1695"/></g>
<use href="#ch2" y="1659"/><use href="#ch2" y="1695"/>
<g fill="#1f2016">
<svg x="850" y="1642" width="22" height="70"><use href="#bm" x="10" y="17"/><use href="#bm" x="10" y="53"/></svg>
<svg x="1774" y="1642" width="16" height="70"><use href="#bm" x="9" y="17"/><use href="#bm" x="9" y="53"/></svg>
<svg x="1896" y="1642" width="22" height="70"><use href="#bm" x="10" y="17"/><use href="#bm" x="10" y="53"/></svg>
</g>
<svg x="361" y="1610" width="341" height="30"><text class="c" x="6" y="22">FL_PVT_138_Vocal_Female_Adrenaline</text></svg>
<svg x="850" y="1610" width="22" height="30"><text class="c" x="6" y="22">FL_PVT</text></svg>
<svg x="1042" y="1610" width="172" height="30"><text class="c" x="6" y="22">FL_PVT_138_Vocal_Female</text></svg>
<svg x="1385" y="1610" width="176" height="30"><text class="c" x="11" y="22">FL_PVT_138_Vocal_Female</text></svg>
<svg x="1563" y="1610" width="16" height="30"><text class="c" x="4" y="22">FL_</text></svg>
<svg x="1584" y="1610" width="15" height="30"><text class="c" x="5" y="22">FL_</text></svg>
<svg x="1604" y="1610" width="16" height="30"><text class="c" x="5" y="22">FL_</text></svg>
<svg x="1625" y="1610" width="15" height="30"><text class="c" x="5" y="22">FL_</text></svg>
<svg x="1774" y="1610" width="16" height="30"><text class="c" x="5" y="22">FL_</text></svg>
<svg x="1896" y="1610" width="22" height="30"><text class="c" x="6" y="22">FL_</text></svg>
<svg x="2068" y="1610" width="16" height="30"><text class="c" x="5" y="22">FL_</text></svg>
<svg x="2086" y="1610" width="174" height="30"><text class="c" x="6" y="22">FL_PVT_138_Vocal_Female</text></svg>
<path class="e" fill="#8d8a50" d="M2084 1610h2v102h-2z"/>

<!-- VOX 1 row 2 -->
<g class="e"><rect class="y" x="1047" y="1717" width="7" height="32"/><rect class="y" x="1059" y="1717" width="11" height="32"/><rect class="y" x="1072" y="1717" width="15" height="32"/><rect class="y" x="1089" y="1717" width="49" height="32"/><rect class="y" x="1145" y="1717" width="33" height="32"/><rect class="y" x="1187" y="1717" width="27" height="32"/><rect class="y" x="1387" y="1717" width="7" height="32"/><rect class="y" x="1401" y="1717" width="10" height="32"/><rect class="y" x="1412" y="1717" width="14" height="32"/><rect class="y" x="1429" y="1717" width="51" height="32"/><rect class="y" x="1488" y="1717" width="32" height="32"/><rect class="y" x="1529" y="1717" width="25" height="32"/></g>
<svg x="1059" y="1718" width="11" height="30"><text class="c" x="5" y="22">FL</text></svg>
<svg x="1072" y="1718" width="15" height="30"><text class="c" x="5" y="22">FL</text></svg>
<svg x="1089" y="1718" width="49" height="30"><text class="c" x="5" y="22">FL_PVT</text></svg>
<svg x="1145" y="1718" width="33" height="30"><text class="c" x="6" y="22">FL_PVT</text></svg>
<svg x="1187" y="1718" width="27" height="30"><text class="c" x="6" y="22">FL_PVT</text></svg>
<svg x="1401" y="1718" width="10" height="30"><text class="c" x="4" y="22">FL</text></svg>
<svg x="1412" y="1718" width="14" height="30"><text class="c" x="6" y="22">FL</text></svg>
<svg x="1429" y="1718" width="51" height="30"><text class="c" x="4" y="22">FL_PVT</text></svg>
<svg x="1488" y="1718" width="32" height="30"><text class="c" x="6" y="22">FL_PVT</text></svg>
<svg x="1529" y="1718" width="25" height="30"><text class="c" x="6" y="22">FL_PVT</text></svg>

<!-- VOX 1 row 3 -->
<g class="e"><rect class="y" x="190" y="1755" width="25" height="32"/><rect class="y" x="216" y="1755" width="17" height="32"/><rect class="y" x="234" y="1755" width="23" height="32"/><rect class="y" x="258" y="1755" width="17" height="32"/><rect class="y" x="276" y="1755" width="25" height="32"/><rect class="y" x="302" y="1755" width="15" height="32"/><rect class="y" x="318" y="1755" width="25" height="32"/><rect class="y" x="344" y="1755" width="16" height="32"/><rect class="y" x="1299" y="1755" width="26" height="32"/><rect class="y" x="1326" y="1755" width="17" height="32"/><rect class="y" x="1344" y="1755" width="24" height="32"/><rect class="y" x="1369" y="1755" width="15" height="32"/></g>
<svg x="190" y="1756" width="25" height="30"><text class="c" x="5" y="22">FL_</text></svg>
<svg x="216" y="1756" width="17" height="30"><text class="c" x="5" y="22">FL_</text></svg>
<svg x="234" y="1756" width="23" height="30"><text class="c" x="5" y="22">FL_</text></svg>
<svg x="258" y="1756" width="17" height="30"><text class="c" x="5" y="22">FL_</text></svg>
<svg x="276" y="1756" width="25" height="30"><text class="c" x="5" y="22">FL_</text></svg>
<svg x="302" y="1756" width="15" height="30"><text class="c" x="5" y="22">FL_</text></svg>
<svg x="318" y="1756" width="25" height="30"><text class="c" x="5" y="22">FL_</text></svg>
<svg x="344" y="1756" width="16" height="30"><text class="c" x="5" y="22">FL_</text></svg>
<svg x="1299" y="1756" width="26" height="30"><text class="c" x="5" y="22">FL_</text></svg>
<svg x="1326" y="1756" width="17" height="30"><text class="c" x="5" y="22">FL_</text></svg>
<svg x="1344" y="1756" width="24" height="30"><text class="c" x="5" y="22">FL_</text></svg>
<svg x="1369" y="1756" width="15" height="30"><text class="c" x="4" y="22">FL_</text></svg>

<!-- Bounce / Pitch / Cut -->
<g class="e"><rect class="y" x="768" y="1793" width="26" height="32"/><rect class="y" x="1813" y="1793" width="27" height="32"/><rect class="y" x="682" y="1831" width="20" height="32"/><rect class="y" x="1727" y="1831" width="21" height="32"/>
<path fill="#7d7a45" d="M798 1792H805V1826H798zM806 1792H808V1826H806zM1844 1792H1850V1826H1844zM1852 1792H1854V1826H1852z"/>
<rect class="y" x="873" y="1869" width="169" height="32"/><rect class="y" x="1919" y="1869" width="169" height="32"/>
<use href="#g" stroke="#2a2a16" clip-path="url(#cYT)"/></g>
<svg x="768" y="1794" width="26" height="30"><text class="c" x="6" y="22">FL_</text></svg>
<svg x="1813" y="1794" width="27" height="30"><text class="c" x="6" y="22">FL_</text></svg>
<svg x="682" y="1832" width="20" height="30"><text class="c" x="6" y="22">FL_</text></svg>
<svg x="1727" y="1832" width="21" height="30"><text class="c" x="6" y="22">FL_</text></svg>

<!-- FX -->
<g class="e" fill="none" stroke-width="4">
<path stroke="#bf5b50" d="M705 1910H782M1790 1910H1864"/>
<path stroke="#ececec" d="M530 1916H680M1554 1916H1704M338 1922H380M850 1922H894M1022 1922H1064M1192 1922H1234M1362 1922H1406M1534 1922H1576M1704 1922H1748M1896 1922H1940M2068 1922H2110M2408 1922H2452M530 1928H702M1554 1928H1726M705 1934H712M1752 1934H1758M360 1940H702M1384 1940H1726M360 1946H702M1384 1946H1726M20 1952H680M1214 1952H1704M360 1970H444M530 1970H680M872 1970H958M1042 1970H1128M1215 1970H1298M1384 1970H1470M1554 1970H1704M1918 1970H2004M2088 1970H2174M2430 1970H2516"/>
<path stroke="#8f744f" d="M508 1964H680M1534 1964H1704"/>
</g>
<rect class="e" x="18" y="1982" width="2" height="34" fill="#bfe9f5"/>
<text x="3066" y="2008" font-size="32" font-weight="bold" fill="#6c6c6c" letter-spacing="1">2/1</text>
<rect class="e" x="3114" y="206" width="2" height="1814" fill="#8e8e8e"/>

<!-- Bottom time ruler -->
<path d="M189 2020V2035h3M361 2020V2035h3M531 2020V2035h3M703 2020V2035h3M873 2020V2035h3M1043 2020V2035h3M1215 2020V2035h3M1385 2020V2035h3M1555 2020V2035h3M1727 2020V2035h3M1896 2020V2035h3M2068 2020V2035h3M2239 2020V2035h3M2409 2020V2035h3M2580 2020V2035h3M2751 2020V2035h3M2922 2020V2035h3M75 2020v4M133 2020v4M247 2020v4M303 2020v4M417 2020v4M475 2020v4M588 2020v4M645 2020v4M759 2020v4M815 2020v4M929 2020v4M987 2020v4M1100 2020v4M1157 2020v4M1272 2020v4M1329 2020v4M1442 2020v4M1500 2020v4M1612 2020v4M1670 2020v4M1783 2020v4M1841 2020v4M1954 2020v4M2011 2020v4M2125 2020v4M2182 2020v4M2296 2020v4M2352 2020v4M2466 2020v4M2523 2020v4M2637 2020v4M2694 2020v4M2808 2020v4M2865 2020v4M2979 2020v4M3036 2020v4" stroke="#808080" stroke-width="1.5" fill="none"/>
<path d="M19 2021L27 2031H19Z" fill="#46b5d6"/>
<g class="tm"><text x="24" y="2042">0:00</text><text x="194" y="2042">0:15</text><text x="366" y="2042">0:30</text><text x="536" y="2042">0:45</text><text x="708" y="2042">1:00</text><text x="878" y="2042">1:15</text><text x="1048" y="2042">1:30</text><text x="1220" y="2042">1:45</text><text x="1390" y="2042">2:00</text><text x="1560" y="2042">2:15</text><text x="1732" y="2042">2:30</text><text x="1902" y="2042">2:45</text><text x="2073" y="2042">3:00</text><text x="2244" y="2042">3:15</text><text x="2414" y="2042">3:30</text><text x="2585" y="2042">3:45</text><text x="2756" y="2042">4:00</text><text x="2927" y="2042">4:15</text></g>

<!-- track heads -->
<g class="e">
<rect x="3130" y="232" width="226" height="288" fill="#a9a9a9"/><rect x="3130" y="524" width="226" height="68" fill="#a9a9a9"/>
<rect x="3130" y="596" width="226" height="172" fill="#4a9fe8"/>
<rect x="3130" y="772" width="226" height="724" fill="#7dfcb0"/>
<rect x="3130" y="1500" width="226" height="364" fill="#f7f28b"/><rect x="3130" y="1868" width="226" height="34" fill="#f7f28b"/>
<rect x="3130" y="1906" width="226" height="68" fill="#fff"/>
<rect x="3130" y="1982" width="226" height="34" fill="#d25f9b"/>
<rect x="3360" y="1982" width="42" height="34" fill="#4a4a4a"/>
<path fill="#242424" d="M3138 336H3140V520H3138zM3138 336H3356V340H3138zM3138 444H3356V448H3138zM3138 482H3356V486H3138zM3138 876H3140V1496H3138zM3138 876H3356V880H3138zM3138 984H3356V988H3138zM3138 1022H3356V1026H3138zM3138 1130H3356V1134H3138zM3138 1202H3356V1206H3138zM3138 1240H3356V1244H3138zM3138 1278H3356V1282H3138zM3138 1316H3356V1320H3138zM3138 1354H3356V1358H3138zM3138 1604H3140V1864H3138zM3138 1604H3356V1608H3138zM3138 1712H3356V1716H3138zM3138 1750H3356V1754H3138zM3138 1788H3356V1792H3138zM3138 1826H3356V1830H3138zM3130 520H3356V524H3130zM3130 592H3356V596H3130zM3130 768H3356V772H3130zM3130 1496H3356V1500H3130zM3130 1864H3356V1868H3130zM3130 1902H3356V1906H3130zM3130 1974H3356V1982H3130zM3130 2016H3356V2020H3130z"/>
<!-- meters -->
<g fill="none" stroke="#1c1c1c" stroke-width="6"><path d="M3371 236V246M3371 248V332M3379 236V246M3379 248V332M3371 344V354M3371 356V440M3379 344V354M3379 356V440M3371 452V454M3371 455V478M3379 452V454M3379 455V478M3371 490V492M3371 493V516M3379 490V492M3379 493V516M3371 528V536M3371 538V588M3379 528V536M3379 538V588M3371 600V610M3371 612V764M3379 600V610M3379 612V764M3371 776V786M3371 788V872M3379 776V786M3379 788V872M3371 884V894M3371 896V980M3379 884V894M3379 896V980M3371 992V994M3371 995V1018M3379 992V994M3379 995V1018M3371 1030V1040M3371 1042V1126M3379 1030V1040M3379 1042V1126M3371 1138V1146M3371 1148V1198M3379 1138V1146M3379 1148V1198M3371 1210V1212M3371 1213V1236M3379 1210V1212M3379 1213V1236M3371 1248V1250M3371 1251V1274M3379 1248V1250M3379 1251V1274M3371 1286V1288M3371 1289V1312M3379 1286V1288M3379 1289V1312M3371 1324V1326M3371 1327V1350M3379 1324V1326M3379 1327V1350M3371 1362V1372M3371 1374V1492M3379 1362V1372M3379 1374V1492M3371 1504V1514M3371 1516V1600M3379 1504V1514M3379 1516V1600M3371 1612V1622M3371 1624V1708M3379 1612V1622M3379 1624V1708M3371 1720V1722M3371 1723V1746M3379 1720V1722M3379 1723V1746M3371 1758V1760M3371 1761V1784M3379 1758V1760M3379 1761V1784M3371 1796V1798M3371 1799V1822M3379 1796V1798M3379 1799V1822M3371 1834V1836M3371 1837V1860M3379 1834V1836M3379 1837V1860M3371 1872V1874M3371 1875V1898M3379 1872V1874M3379 1875V1898M3371 1910V1918M3371 1920V1970M3379 1910V1918M3379 1920V1970M3371 1986V1988M3371 1989V2012M3379 1986V1988M3379 1989V2012"/></g>
</g>
<g stroke="#2a2a2a" fill="#2a2a2a"><use href="#iS" x="3147" y="249"/><use href="#iD" x="3157" y="357"/><use href="#iR" x="3157" y="465"/><use href="#iR" x="3157" y="503"/><use href="#iE" x="3147" y="541"/></g>
<g class="n" fill="#222"><text x="3167" y="256">+KICK 2</text><text x="3177" y="364">KICK</text><text x="3177" y="472">KICK</text><text x="3177" y="510">KICK</text><text x="3167" y="548">+DRUMS</text></g>
<g stroke="#173a5c" fill="#173a5c"><use href="#iD" x="3147" y="613"/></g>
<text class="n" x="3167" y="620" fill="#14304d">+BASS</text>
<g stroke="#1f4a36" fill="#1f4a36"><use href="#iS" x="3147" y="789"/><use href="#iD" x="3157" y="897"/><use href="#iR" x="3157" y="1005"/><use href="#iD" x="3157" y="1043"/><use href="#iE" x="3157" y="1151"/><use href="#iR" x="3157" y="1223"/><use href="#iR" x="3157" y="1261"/><use href="#iR" x="3157" y="1299"/><use href="#iR" x="3157" y="1337"/><use href="#iD" x="3157" y="1375"/></g>
<g class="n" fill="#1c3a2c"><text x="3167" y="796">+SYNTH</text><text x="3177" y="904">KEY</text><text x="3177" y="1012">ACID</text><text x="3177" y="1050">ACID (Bounce)</text><text x="3177" y="1158">22 Group</text><text x="3177" y="1230">LD 1</text><text x="3177" y="1268">LD 1</text><text x="3177" y="1306">LD pre drop</text><text x="3177" y="1344">LD 2</text><text x="3177" y="1382">SYNTH BREAK</text></g>
<g stroke="#4a4a22" fill="#4a4a22"><use href="#iS" x="3147" y="1517"/><use href="#iD" x="3157" y="1625"/><use href="#iR" x="3157" y="1733"/><use href="#iR" x="3157" y="1771"/><use href="#iR" x="3157" y="1809"/><use href="#iR" x="3157" y="1847"/><use href="#iR" x="3147" y="1885"/></g>
<g class="n" fill="#3a3a20"><text x="3167" y="1524">+VOCAL</text><text x="3177" y="1632">VOX 1</text><text x="3177" y="1740">VOX 1</text><text x="3177" y="1778">VOX 1</text><text x="3177" y="1816">VOX 1 (Bounce)</text><text x="3177" y="1854">VOX PITCH</text><text x="3169" y="1892">+VOX CUT</text></g>
<g stroke="#444" fill="#444"><use href="#iE" x="3147" y="1923"/></g>
<text class="n" x="3167" y="1930" fill="#3c3c3c">+FX</text>
<g stroke="#4a1434" fill="#4a1434"><use href="#iR" x="3147" y="1999"/></g>
<text class="n" x="3171" y="2006" fill="#4a1434">Main</text>

<!-- top right controls -->
<rect x="3138" y="159" width="55" height="24" rx="12" fill="#3a3a3a" stroke="#1f1f1f" stroke-width="2"/>
<text x="3149" y="178" font-size="20" fill="#ddd">Set</text>
<rect class="e" x="3216" y="158" width="46" height="26" fill="#202020"/><rect class="e" x="3218" y="160" width="42" height="22" fill="#2c2c2c"/>
<path d="M3234 177L3244 167" stroke="#ddd" stroke-width="3"/><circle cx="3245" cy="166" r="2" fill="#ddd"/>
<rect class="e" x="3270" y="158" width="47" height="26" fill="#202020"/><rect class="e" x="3272" y="160" width="43" height="22" fill="#d9694a"/>
<rect class="e" x="3287" y="170" width="13" height="9" fill="#111"/><path d="M3290 170V167Q3293.5 161 3297 167V170" fill="none" stroke="#111" stroke-width="2"/>
<ellipse cx="3149.5" cy="207" rx="12.5" ry="13" fill="#1f1f1f"/><ellipse cx="3181.5" cy="207" rx="12.5" ry="13" fill="#1f1f1f"/>
<path d="M3156 206H3150V201L3143 207L3150 213V208H3156Z" fill="#777"/><path d="M3175 206H3181V201L3188 207L3181 213V208H3175Z" fill="#ddd"/>

<!-- bottom right -->
<rect class="e" x="3130" y="2028" width="30" height="26" fill="#1e1e1e"/><rect class="e" x="3133" y="2031" width="24" height="20" fill="#f5b061"/>
<path class="e" fill="#111" d="M3136 2037h2v8h-2zM3141 2034h2v14h-2zM3145 2032h2v18h-2zM3149 2034h2v14h-2zM3153 2038h2v6h-2z"/>
<rect class="e" x="3166" y="2028" width="70" height="26" fill="#1e1e1e"/><rect class="e" x="3168" y="2030" width="66" height="22" fill="#363636"/><rect class="e" x="3168" y="2030" width="20" height="22" fill="#2f7f9f"/>
<text x="3175" y="2048" font-size="20" font-weight="bold" fill="#9a9a9a">1.00x</text>
<rect class="e" x="3288" y="2028" width="30" height="26" fill="#1e1e1e"/><rect class="e" x="3290" y="2030" width="26" height="22" fill="#363636"/>
<rect class="e" x="3324" y="2028" width="30" height="26" fill="#1e1e1e"/><rect class="e" x="3326" y="2030" width="26" height="22" fill="#363636"/>
<text x="3296" y="2048" font-size="18" font-weight="bold" fill="#b8b8b8">H</text><text x="3331" y="2048" font-size="18" font-weight="bold" fill="#b8b8b8">W</text>
</svg>
</body></html>
